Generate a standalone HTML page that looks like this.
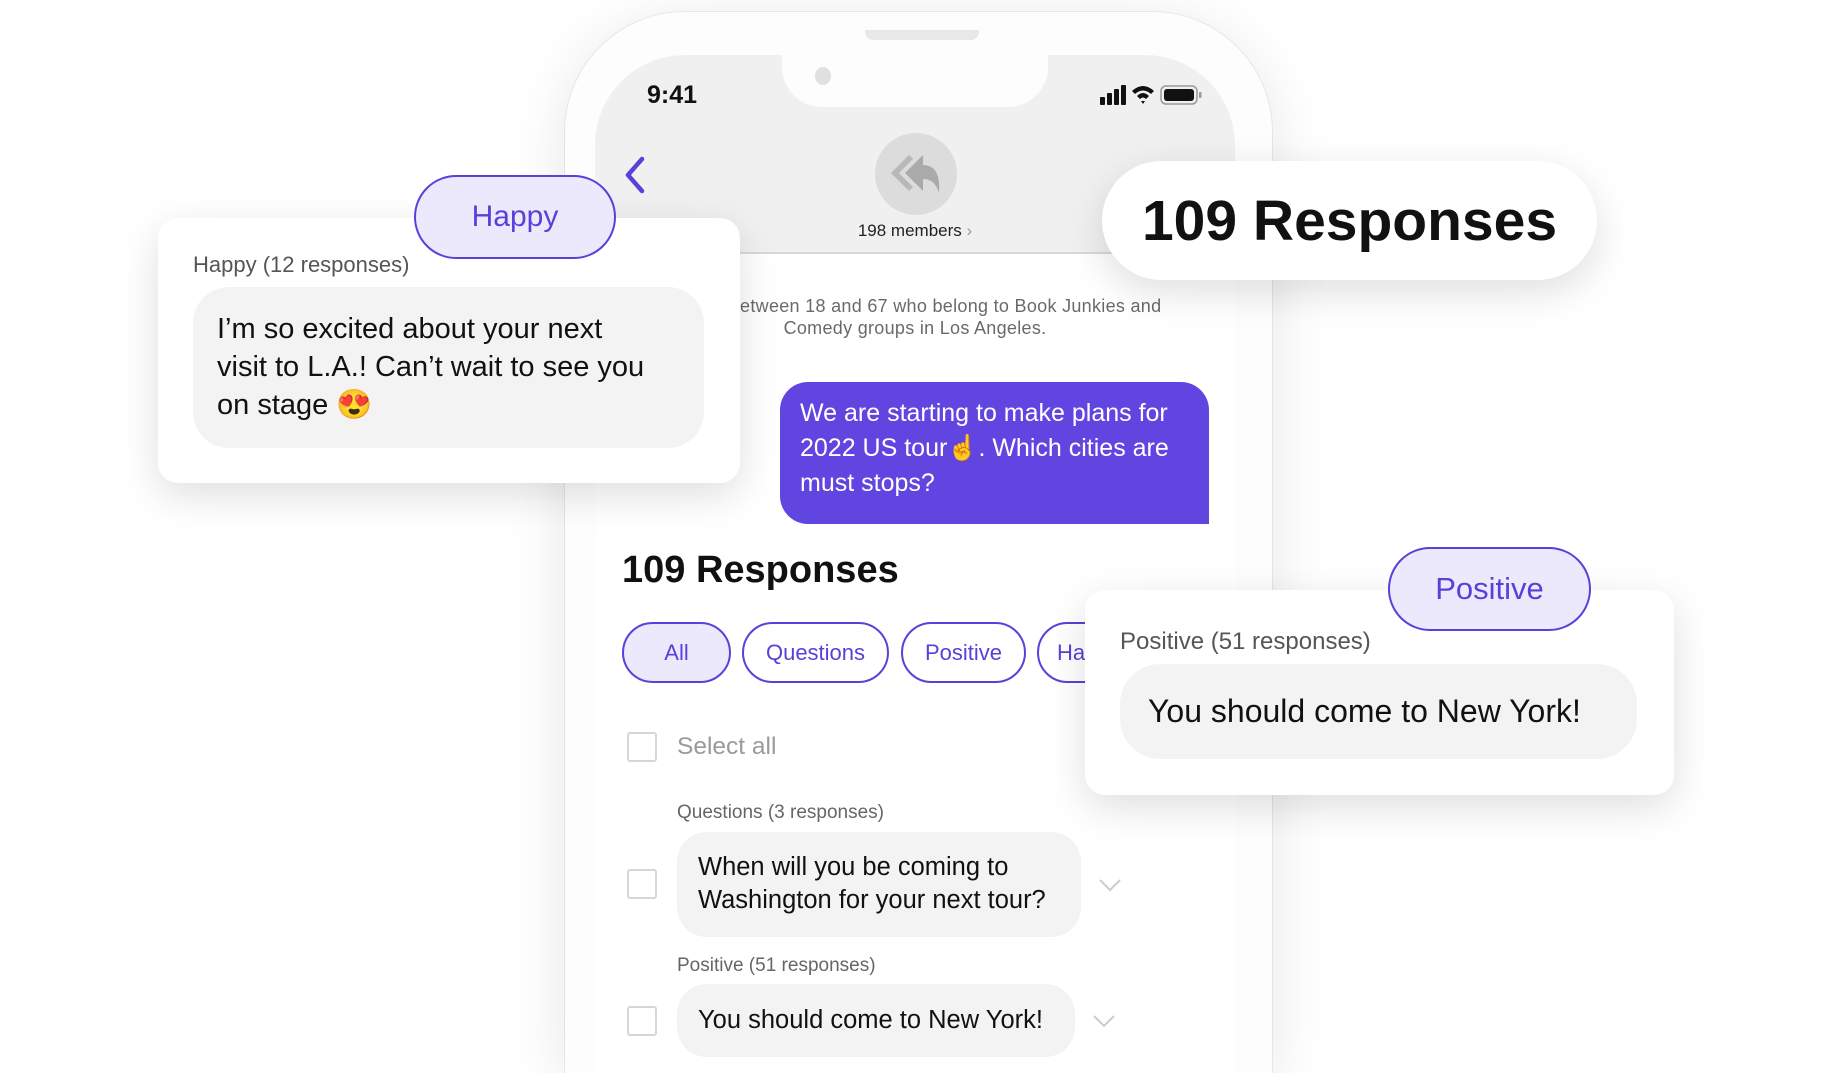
<!DOCTYPE html>
<html><head><meta charset="utf-8"><style>
*{margin:0;padding:0;box-sizing:border-box}
html,body{width:1830px;height:1073px;overflow:hidden}
body{background:#fff;position:relative;font-family:"Liberation Sans",sans-serif;color:#111}
.abs{position:absolute}
.phone{left:565px;top:12px;width:707px;height:1061px;border-radius:120px 120px 0 0;background:#fdfdfd;box-shadow:0 10px 60px rgba(0,0,0,.10),0 0 0 1px #f0f0f0}
.screen{left:595px;top:55px;width:640px;height:1018px;border-radius:90px 90px 0 0;background:#fff;overflow:hidden}
.hdr{left:0;top:0;width:640px;height:199px;background:#f0f0f0;border-bottom:2px solid #d8d8d8}
.notch{left:187px;top:-2px;width:266px;height:54px;background:#fdfdfd;border-radius:0 0 40px 40px}
.pill{border:2.5px solid #5b3fd9;border-radius:40px;color:#5b3fd9;display:flex;align-items:center;justify-content:center;background:#fff}
.fill{background:#ece9fd}
.card{background:#fff;border-radius:20px;box-shadow:0 12px 40px rgba(0,0,0,.13)}
.bub{background:#f3f3f3;border-radius:36px}
.cb{width:30px;height:30px;border:2px solid #d6d6d6;border-radius:3px;background:#fff}
.lbl{color:#666;font-size:19px}
</style></head><body>
<div class="abs phone"></div>
<div class="abs" style="left:865px;top:30px;width:114px;height:10px;background:#e8e8e8;border-radius:0 0 8px 8px"></div>
<div class="abs screen">
  <div class="abs hdr"></div>
  <div class="abs notch"></div>
  <div class="abs" style="left:220px;top:12px;width:16px;height:18px;border-radius:50%;background:#e0e0e0"></div>
  <div class="abs" style="left:52px;top:26px;font-size:25px;font-weight:bold">9:41</div>
  <svg class="abs" style="left:505px;top:28px" width="108" height="24" viewBox="0 0 108 24">
    <rect x="0" y="14" width="5" height="8" rx="1" fill="#111"/><rect x="7" y="10" width="5" height="12" rx="1" fill="#111"/><rect x="14" y="6" width="5" height="16" rx="1" fill="#111"/><rect x="21" y="2" width="5" height="20" rx="1" fill="#111"/>
    <path d="M32 8 Q43 -2 54 8 L51 11 Q43 4 35 11Z M37 13 Q43 7 49 13 L46 16 Q43 13 40 16Z M41 18 L43 21 L45 18Z" fill="#111"/>
    <rect x="61" y="3" width="36" height="18" rx="5" fill="none" stroke="#999" stroke-width="1.5"/><rect x="64" y="6" width="30" height="12" rx="3" fill="#111"/><rect x="99" y="9" width="2.5" height="6" rx="1" fill="#999"/>
  </svg>
  <svg class="abs" style="left:25px;top:100px" width="30" height="40" viewBox="0 0 30 40"><path d="M22 4 L8 20 L22 36" fill="none" stroke="#5b3fd9" stroke-width="4.5" stroke-linecap="round" stroke-linejoin="round"/></svg>
  <div class="abs" style="left:280px;top:78px;width:82px;height:82px;border-radius:50%;background:#dcdcdc"></div>
  <svg class="abs" style="left:292px;top:96px" width="60" height="46" viewBox="0 0 60 46"><path d="M22 4 L4 22 L22 40 L26 36 L12 22 L26 8Z" fill="#b8b8b8"/><path d="M36 4 L18 22 L36 40 L36 28 Q48 28 52 42 Q54 14 36 14Z" fill="#aaa"/></svg>
  <div class="abs" style="left:0;width:640px;top:166px;text-align:center;font-size:17px;color:#222">198 members <span style="color:#999">›</span></div>
  <div class="abs" style="left:0;width:640px;top:240px;text-align:center;font-size:18px;color:#6a6a6a;line-height:22px;letter-spacing:.3px">people between 18 and 67 who belong to Book Junkies and<br>Comedy groups in Los Angeles.</div>
  <div class="abs" style="left:185px;top:327px;width:429px;height:142px;background:#6045e0;border-radius:28px 28px 0 28px;color:#fff;font-size:25px;line-height:35px;padding:14px 20px">We are starting to make plans for 2022 US tour☝️. Which cities are must stops?</div>
  <div class="abs" style="left:27px;top:494px;font-size:38px;font-weight:bold">109 Responses</div>
  <div class="abs pill fill" style="left:27px;top:567px;width:109px;height:61px;font-size:22px">All</div>
  <div class="abs pill" style="left:147px;top:567px;width:147px;height:61px;font-size:22px">Questions</div>
  <div class="abs pill" style="left:306px;top:567px;width:125px;height:61px;font-size:22px">Positive</div>
  <div class="abs pill" style="left:442px;top:567px;width:125px;height:61px;font-size:22px;justify-content:flex-start;padding-left:18px">Happy</div>
  <div class="abs cb" style="left:32px;top:677px"></div>
  <div class="abs" style="left:82px;top:677px;font-size:24.5px;color:#9a9a9a;line-height:30px">Select all</div>
  <div class="abs lbl" style="left:82px;top:747px">Questions (3 responses)</div>
  <div class="abs cb" style="left:32px;top:814px"></div>
  <div class="abs bub" style="left:82px;top:777px;width:404px;height:105px;font-size:25.5px;line-height:33px;padding:19px 21px;border-radius:30px">When will you be coming to Washington for your next tour?</div>
  <svg class="abs" style="left:503px;top:822px" width="24" height="16"><path d="M2 3 L12 13 L22 3" fill="none" stroke="#ccc" stroke-width="2"/></svg>
  <div class="abs lbl" style="left:82px;top:900px">Positive (51 responses)</div>
  <div class="abs cb" style="left:32px;top:951px"></div>
  <div class="abs bub" style="left:82px;top:929px;width:398px;height:73px;font-size:25.5px;line-height:73px;padding:0 21px;border-radius:30px">You should come to New York!</div>
  <svg class="abs" style="left:497px;top:958px" width="24" height="16"><path d="M2 3 L12 13 L22 3" fill="none" stroke="#ccc" stroke-width="2"/></svg>
</div>

<div class="abs card" style="left:158px;top:218px;width:582px;height:265px"></div>
<div class="abs pill fill" style="left:414px;top:175px;width:202px;height:84px;border-radius:42px;font-size:30px">Happy</div>
<div class="abs" style="left:193px;top:252px;font-size:22px;color:#555">Happy (12 responses)</div>
<div class="abs bub" style="left:193px;top:287px;width:511px;height:161px;font-size:29px;line-height:38px;padding:23px 55px 23px 24px">I’m so excited about your next visit to L.A.! Can’t wait to see you on stage 😍</div>

<div class="abs card" style="left:1102px;top:161px;width:495px;height:119px;border-radius:60px;display:flex;align-items:center;justify-content:center;font-size:57px;font-weight:bold">109 Responses</div>

<div class="abs card" style="left:1085px;top:590px;width:589px;height:205px"></div>
<div class="abs pill fill" style="left:1388px;top:547px;width:203px;height:84px;border-radius:42px;font-size:31px">Positive</div>
<div class="abs" style="left:1120px;top:628px;font-size:24px;color:#555">Positive (51 responses)</div>
<div class="abs bub" style="left:1120px;top:664px;width:517px;height:95px;font-size:32px;line-height:95px;padding-left:28px;border-radius:40px">You should come to New York!</div>
</body></html>
